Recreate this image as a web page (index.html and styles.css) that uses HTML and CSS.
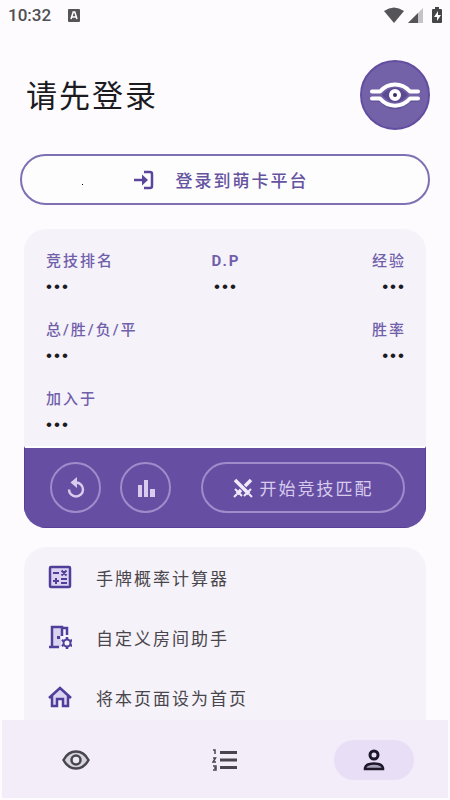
FILE: index.html
```html
<!DOCTYPE html>
<html lang="zh-CN">
<head>
<meta charset="utf-8">
<meta name="viewport" content="width=device-width, initial-scale=1">
<title>请先登录</title>
<link rel="stylesheet" href="styles.css">
</head>
<body>
<div class="app">
  <header class="status">
    <span class="clock">10:32</span>
    <svg class="status-app" viewBox="0 0 12 13" aria-hidden="true"><rect width="12" height="13" rx="1" fill="#555458"/><path d="M3 10 5.200 3h1.600L9 10M4 8h4" fill="none" stroke="#fff" stroke-width="1.500"/></svg>
    <span class="status-icons">
      <svg width="20" height="16" viewBox="0 0 20 16" aria-hidden="true"><path d="M0 4Q10-3 20 4L10 16Z" fill="#555458"/></svg>
      <svg width="15" height="15" viewBox="0 0 15 15" aria-hidden="true"><path d="M15 0v15H0Z" fill="#c5c3c8"/><path d="M10 5v10H0Z" fill="#555458"/></svg>
      <svg width="10" height="16" viewBox="0 0 10 16" aria-hidden="true"><path d="M3 0h4v2h2q1 0 1 1v12q0 1-1 1H1q-1 0-1-1V3q0-1 1-1h2Z" fill="#454449"/><path d="M6 4 2 10h3v4l4-6H6Z" fill="#fff"/></svg>
    </span>
  </header>

  <main class="content">
    <div class="heading">
      <h1>请先登录</h1>
      <svg class="avatar" viewBox="0 0 70 70" aria-hidden="true">
        <circle cx="35" cy="35" r="34" fill="#7462a9" stroke="#634da0" stroke-width="2"/>
        <path d="M11 40H21C29 50 41 50 49 40H59" fill="none" stroke="#51448a" stroke-width="4" opacity=".5"/>
        <path d="M22 35Q35 20 48 35Q35 50 22 35Z" fill="#5b4a91"/>
        <g fill="none" stroke="#fff" stroke-width="4" stroke-linecap="round" stroke-linejoin="round"><path d="M12 31.500H20C28 22 42 22 50 31.500H58"/><path d="M12 38.500H20C28 48 42 48 50 38.500H58"/></g>
        <circle cx="35" cy="35" r="4" fill="#392c67" stroke="#fff" stroke-width="4"/>
      </svg>
    </div>

    <button class="login" type="button">
      <svg class="login-icon" viewBox="0 0 24 24" aria-hidden="true"><path d="M2 12h10M12 4h6q2 0 2 2v12q0 2-2 2h-6" fill="none" stroke="currentColor" stroke-width="2.500"/><path d="M10 6.500 16 12l-6 5.500Z"/></svg>
      登录到萌卡平台
      <i class="speck"></i>
    </button>

    <section class="card stats">
      <dl class="grid">
        <div><dt>竞技排名</dt><dd>•••</dd></div>
        <div class="center"><dt>D.P</dt><dd>•••</dd></div>
        <div class="end"><dt>经验</dt><dd>•••</dd></div>
        <div class="wide"><dt>总/胜/负/平</dt><dd>•••</dd></div>
        <div class="end"><dt>胜率</dt><dd>•••</dd></div>
        <div><dt>加入于</dt><dd>•••</dd></div>
      </dl>
      <div class="actions">
        <button class="round" type="button" aria-label="刷新"><svg viewBox="0 0 24 24" aria-hidden="true"><path d="M12 6.500a7 7 0 1 1-7 7" fill="none" stroke="currentColor" stroke-width="2.500"/><path d="M13 1v11L6.500 6.500Z"/></svg></button>
        <button class="round" type="button" aria-label="统计"><svg viewBox="0 0 24 24" aria-hidden="true"><path d="M4 9h4v12H4zM10 4h4v17h-4zM16 13h5v8h-5z"/></svg></button>
        <button class="match" type="button">
          <svg viewBox="0 0 20 20" aria-hidden="true"><path d="M2 2 16 16M18 2l-6 6M8 12l-4 4" fill="none" stroke="currentColor" stroke-width="3.500"/><path d="m2 11 7 7M18 11l-7 7M1 19l3-3M19 19l-3-3" fill="none" stroke="currentColor" stroke-width="2"/></svg>
          开始竞技匹配
        </button>
      </div>
    </section>

    <nav class="card list" aria-label="工具">
      <a href="#calculator">
        <svg viewBox="0 0 24 24" aria-hidden="true"><rect x="2" y="2" width="20" height="20" rx="1" fill="#dcd3f0" stroke="#503e9b" stroke-width="2.500"/><path d="M5 8h6M5 16h6M8 13v6M13 14h6M13 18h6M13.500 5.500l5 5M18.500 5.500l-5 5" fill="none" stroke="#503e9b" stroke-width="2"/></svg>
        手牌概率计算器
      </a>
      <a href="#room">
        <svg viewBox="0 0 24 24" aria-hidden="true"><path d="M4 2h9v20H4Z" fill="#dcd3f0"/><path d="M1 22h10M4 22V2h10v9M14 3h5v7" fill="none" stroke="#503e9b" stroke-width="2.500"/><path d="M9 11h3v3H9Z" fill="#503e9b"/><circle cx="19" cy="18" r="3.500" fill="#f6f2f9" stroke="#503e9b" stroke-width="2"/><path d="M19 12v2M19 22v2M13.800 15l1.700 1M22.500 20l1.700 1M13.800 21l1.700-1M22.500 16l1.700-1" stroke="#503e9b" stroke-width="2.500"/></svg>
        自定义房间助手
      </a>
      <a href="#home">
        <svg viewBox="0 0 24 24" aria-hidden="true"><path d="M4 11 12 4l8 7v11h-5v-7H9v7H4Z" fill="#dcd3f0"/><path d="M1 13 12 3l11 10M4 11v10h5v-7h6v7h5V11" fill="none" stroke="#503e9b" stroke-width="2.500"/></svg>
        将本页面设为首页
      </a>
    </nav>
  </main>

  <nav class="tabs" aria-label="主导航">
    <a href="#watch" aria-label="观战"><svg width="28" height="20" viewBox="0 0 28 20" aria-hidden="true"><path d="M1.500 10Q6 1.500 14 1.500T26.500 10Q22 18.500 14 18.500T1.500 10Z" fill="#d8d4dd" stroke="#48454e" stroke-width="2.500"/><circle cx="14" cy="10" r="4.500" fill="#eeeaf3" stroke="#48454e" stroke-width="2.500"/></svg></a>
    <a href="#ranking" aria-label="排行"><svg width="26" height="22" viewBox="0 0 26 22" aria-hidden="true"><path d="M8 3.500h17M8 11h17M8 18.500h17" stroke="#48454e" stroke-width="3"/><path d="M1 1h2v4M1 9h2.500L1 13h3M1 17h3v4H1M2 19h2" fill="none" stroke="#48454e" stroke-width="1.500"/></svg></a>
    <a class="active" href="#me" aria-label="我的"><svg width="22" height="22" viewBox="0 0 22 22" aria-hidden="true"><circle cx="11" cy="6" r="4" fill="none" stroke="#1d192b" stroke-width="3"/><path d="M2 20v-1Q3 14.500 11 14.500T20 19v1Z" fill="#aaa1bb" stroke="#1d192b" stroke-width="2.500"/></svg></a>
  </nav>
</div>
</body>
</html>
```
FILE: styles.css
```css
* { box-sizing: border-box; }

body {
  margin: 0;
  background: #fdfbfe;
  color: #1c1b1f;
  font-family: Roboto, "Noto Sans CJK SC", sans-serif;
  font-size: 17px;
  letter-spacing: 2px;
}

button {
  font: inherit;
  letter-spacing: inherit;
  padding: 0;
  background: none;
}

a { color: inherit; text-decoration: none; }
svg { display: block; flex: none; fill: currentColor; }

.app {
  display: flex;
  flex-direction: column;
  height: 100vh;
  padding-bottom: 2px;
}

.status {
  display: flex;
  align-items: center;
  height: 30px;
  padding: 0 8px;
  color: #4f4e52;
}

.clock { font-size: 17px; font-weight: 500; letter-spacing: 0; }
.status-app { width: 12px; height: 13px; margin-left: 17px; }
.status-icons { display: flex; align-items: center; gap: 4px; margin-left: auto; }
.status-icons svg:last-child { margin-left: 5px; }

.content { flex: 1; min-height: 0; overflow: hidden; }

.heading {
  display: flex;
  align-items: center;
  justify-content: space-between;
  padding: 30px 20px 24px 26px;
}

h1 { margin: 0; padding-top: 4px; font-size: 31px; font-weight: 400; line-height: 40px; }
.avatar { width: 70px; height: 70px; }

.login {
  position: relative;
  display: flex;
  align-items: center;
  justify-content: center;
  gap: 20px;
  width: calc(100% - 40px);
  height: 51px;
  margin: 0 20px;
  padding-right: 10px;
  border: 2px solid #7e70b3;
  border-radius: 26px;
  background: #fefdfe;
  color: #65539f;
  font-weight: 500;
}

.login-icon { width: 24px; height: 24px; color: #5b469e; }

.speck {
  position: absolute;
  left: 60px;
  top: 28px;
  width: 1px;
  height: 1px;
  background: #000;
}

.card {
  margin: 0 24px;
  border-radius: 22px;
  background: #f6f2f9;
  overflow: hidden;
}

.stats { margin-top: 24px; }

.grid {
  display: grid;
  grid-template-columns: 1fr 1fr 1fr;
  row-gap: 17px;
  margin: 0;
  padding: 21px 20px 6px 22px;
}

.wide { grid-column: span 2; }
.center { text-align: center; }
.end { text-align: right; }

dt {
  color: #705fab;
  font-size: 15px;
  font-weight: 500;
  line-height: 22px;
}

.center dt { font-weight: 700; }

dd {
  margin: 0;
  font-family: "Liberation Sans", sans-serif;
  font-size: 17px;
  line-height: 30px;
}

.actions {
  display: flex;
  align-items: center;
  gap: 19px;
  height: 82px;
  padding: 0 20px 0 25px;
  border: 1px solid #583f99;
  border-top: 2px solid #fff;
  background: #664fa3;
  color: #d8cbed;
}

.round, .match {
  display: flex;
  align-items: center;
  justify-content: center;
  height: 51px;
  border: 2px solid #a08bcb;
  border-radius: 26px;
  color: inherit;
}

.round { width: 51px; }
.round svg { width: 24px; height: 24px; }
.match { flex: 1; max-width: 204px; gap: 7px; margin-left: auto; }
.match svg { width: 20px; height: 20px; color: #f0e9fa; }

.list { margin-top: 19px; padding-bottom: 24px; color: #48464c; }

.list a {
  display: flex;
  align-items: center;
  gap: 24px;
  height: 60px;
  padding: 0 24px;
}

.list svg { width: 24px; height: 24px; }

.tabs {
  display: flex;
  align-items: center;
  height: 78px;
  margin: 0 2px;
  padding-top: 2px;
  background: #f2edf8;
}

.tabs a {
  display: flex;
  align-items: center;
  justify-content: center;
  width: 80px;
  height: 40px;
  margin: 0 auto;
  border-radius: 20px;
}

.tabs .active { background: #e8dff7; }
```
